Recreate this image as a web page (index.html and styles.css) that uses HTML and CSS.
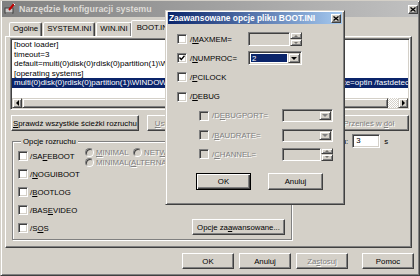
FILE: index.html
```html
<!DOCTYPE html>
<html lang="pl">
<head>
  <meta charset="UTF-8">
  <title>Narzędzie konfiguracji systemu</title>
  <link rel="stylesheet" href="styles.css">
</head>
<body>

<div class="window main-window">
  <div class="titlebar inactive">
    <svg class="app-icon" width="12" height="12" viewBox="0 0 12 12">
      <rect x="1" y="5" width="8" height="5" fill="#c8c8c8" stroke="#404040" stroke-width="1"/>
      <rect x="2" y="10" width="6" height="1.5" fill="#808080"/>
      <path d="M5 7 L10 1" stroke="#c00000" stroke-width="2"/>
      <path d="M9.5 0.5 L11 2" stroke="#fff" stroke-width="1"/>
    </svg>
    <span class="title-text">Narzędzie konfiguracji systemu</span>
    <span class="close-btn">
      <svg width="6" height="5" viewBox="0 0 6 5"><path d="M0.5 0.5 L5.5 4.5 M5.5 0.5 L0.5 4.5" stroke="#000" stroke-width="1.3"/></svg>
    </span>
  </div>

  <div class="tabs">
    <div class="tab">Ogólne</div>
    <div class="tab">SYSTEM.INI</div>
    <div class="tab">WIN.INI</div>
    <div class="tab active">BOOT.INI</div>
    <div class="tab">Usługi</div>
    <div class="tab">Uruchamianie</div>
  </div>

  <div class="tab-panel">
    <div class="ini-box">
      <div class="ini-lines">
        <div class="ini-line">[boot loader]</div>
        <div class="ini-line">timeout=3</div>
        <div class="ini-line">default=multi(0)disk(0)rdisk(0)partition(1)\WINDOWS</div>
        <div class="ini-line">[operating systems]</div>
        <div class="ini-line selected">multi(0)disk(0)rdisk(0)partition(1)\WINDOWS="Microsoft Windows XP Professional" /noexecute=optin /fastdetect</div>
      </div>
      <div class="hscroll">
        <span class="sb-btn"><i class="arrow-left"></i></span>
        <span class="sb-thumb"></span>
        <span class="sb-track"></span>
        <span class="sb-btn"><i class="arrow-right"></i></span>
      </div>
    </div>

    <div class="action-row">
      <button class="btn btn-check"><u>S</u>prawdź wszystkie ścieżki rozruchu</button>
      <button class="btn btn-default-os" disabled><u>U</u>staw jako domyślne</button>
      <span class="spacer"></span>
      <button class="btn btn-move" disabled>Przenieś w <u>g</u>órę</button>
      <button class="btn btn-move" disabled>Przenieś w <u>d</u>ół</button>
    </div>

    <div class="lower">
      <fieldset class="groupbox">
        <legend>Opcje rozruchu</legend>
        <div class="group-body">
          <div class="check-col">
            <div class="check-row"><span class="chk"></span><span>/SA<u>F</u>EBOOT</span></div>
            <div class="check-row"><span class="chk"></span><span>/<u>N</u>OGUIBOOT</span></div>
            <div class="check-row"><span class="chk"></span><span>/<u>B</u>OOTLOG</span></div>
            <div class="check-row"><span class="chk"></span><span>/BAS<u>E</u>VIDEO</span></div>
            <div class="check-row"><span class="chk"></span><span>/S<u>O</u>S</span></div>
          </div>
          <div class="radio-grid">
            <div class="radio-row"><span class="radio"></span><span><u>M</u>INIMAL</span></div>
            <div class="radio-row"><span class="radio"></span><span>NET<u>W</u>ORK</span></div>
            <div class="radio-row"><span class="radio"></span><span><u>D</u>SREPAIR</span></div>
            <div class="radio-row wide"><span class="radio"></span><span>MINIMAL(<u>A</u>LTERNATESHELL)</span></div>
          </div>
          <button class="btn btn-advanced">Opcje za<u>a</u>wansowane...</button>
        </div>
      </fieldset>

      <div class="timeout">
        <span>Limit c<u>z</u>asu:</span>
        <span class="text-field">3</span>
        <span>s</span>
      </div>
    </div>
  </div>

  <div class="footer">
    <button class="btn btn-footer">OK</button>
    <button class="btn btn-footer">Anuluj</button>
    <button class="btn btn-footer" disabled>Za<u>s</u>tosuj</button>
    <button class="btn btn-footer btn-help">Pomoc</button>
  </div>
</div>

<div class="window dialog">
  <div class="titlebar active">
    <span class="title-text">Zaawansowane opcje pliku BOOT.INI</span>
    <span class="close-btn">
      <svg width="6" height="5" viewBox="0 0 6 5"><path d="M0.5 0.5 L5.5 4.5 M5.5 0.5 L0.5 4.5" stroke="#000" stroke-width="1.3"/></svg>
    </span>
  </div>

  <div class="dialog-body">
    <div class="opt-row">
      <div class="opt"><span class="chk"></span><span>/<u>M</u>AXMEM=</span></div>
      <div class="spin disabled">
        <span class="spin-field"></span>
        <span class="spin-btns">
          <span class="spin-btn"><i class="arrow-up"></i></span>
          <span class="spin-btn"><i class="arrow-down"></i></span>
        </span>
      </div>
    </div>

    <div class="opt-row">
      <div class="opt">
        <span class="chk">
          <svg width="6" height="6" viewBox="0 0 6 6"><path d="M0.5 2.5 L2.3 4.5 L5.5 0.8" fill="none" stroke="#000" stroke-width="1.3"/></svg>
        </span>
        <span>/<u>N</u>UMPROC=</span>
      </div>
      <div class="combo">
        <span class="combo-value">2</span>
        <span class="combo-btn"><i class="arrow-down"></i></span>
      </div>
    </div>

    <div class="opt-row">
      <div class="opt"><span class="chk"></span><span>/<u>P</u>CILOCK</span></div>
    </div>

    <div class="opt-row">
      <div class="opt"><span class="chk"></span><span>/<u>D</u>EBUG</span></div>
    </div>

    <div class="opt-row sub">
      <div class="opt disabled"><span class="chk"></span><span>/D<u>E</u>BUGPORT=</span></div>
      <div class="combo disabled">
        <span class="combo-value"></span>
        <span class="combo-btn"><i class="arrow-down"></i></span>
      </div>
    </div>

    <div class="opt-row sub">
      <div class="opt disabled"><span class="chk"></span><span>/<u>B</u>AUDRATE=</span></div>
      <div class="combo disabled">
        <span class="combo-value"></span>
        <span class="combo-btn"><i class="arrow-down"></i></span>
      </div>
    </div>

    <div class="opt-row sub">
      <div class="opt disabled"><span class="chk"></span><span>/<u>C</u>HANNEL=</span></div>
      <div class="spin disabled">
        <span class="spin-field"></span>
        <span class="spin-btns">
          <span class="spin-btn"><i class="arrow-up"></i></span>
          <span class="spin-btn"><i class="arrow-down"></i></span>
        </span>
      </div>
    </div>

    <div class="dialog-buttons">
      <button class="btn btn-dialog is-default">OK</button>
      <button class="btn btn-dialog">Anuluj</button>
    </div>
  </div>
</div>

</body>
</html>
```

FILE: styles.css
```css
* {
  box-sizing: border-box;
}
body {
  margin: 0;
  background: #d4d0c8;
  font-family: "Liberation Sans", Arial, sans-serif;
  font-size: 7.8px;
  color: #000;
}
u {
  text-decoration-thickness: 1px;
  text-underline-offset: 1px;
}

/* window frames */
.window {
  background: #d4d0c8;
  border: 1px solid;
  border-color: #d4d0c8 #404040 #404040 #d4d0c8;
  box-shadow: inset 1px 1px #fff, inset -1px -1px #808080;
}
.main-window {
  width: 420px;
  height: 276px;
  padding: 0 1px 1px 1px;
  display: flex;
  flex-direction: column;
}
.titlebar {
  display: flex;
  align-items: center;
  flex-shrink: 0;
  color: #fff;
  font-weight: bold;
  font-size: 8.4px;
}
.titlebar.inactive {
  height: 16px;
  padding: 0 0 0 2px;
  background: linear-gradient(to right, #808080, #c0c0c0);
  color: #dedbd6;
  font-size: 8.9px;
}
.titlebar.active {
  height: 12px;
  padding: 0 1px 0 1px;
  background: linear-gradient(to right, #0a246a, #a6caf0);
}
.app-icon {
  margin-right: 3px;
}
.title-text {
  white-space: nowrap;
}
.close-btn {
  margin-left: auto;
  width: 10px;
  height: 9px;
  display: flex;
  align-items: center;
  justify-content: center;
  background: #d4d0c8;
  border: 1px solid;
  border-color: #fff #404040 #404040 #fff;
  box-shadow: inset -1px -1px #808080;
}

/* tabs */
.tabs {
  display: flex;
  align-items: flex-end;
  height: 16px;
  margin-top: 3px;
  padding-left: 7px;
  position: relative;
  z-index: 1;
  flex-shrink: 0;
}
.tab {
  height: 14px;
  line-height: 12px;
  padding: 0 3px;
  margin-right: 1px;
  white-space: nowrap;
  background: #d4d0c8;
  border: 1px solid;
  border-bottom: none;
  border-color: #fff #404040 transparent #fff;
  border-radius: 2px 2px 0 0;
  box-shadow: inset -1px 0 #808080;
}
.tab.active {
  height: 17px;
  line-height: 14px;
  margin: 0 -1px -1px -2px;
  padding: 0 5px;
}
.tab-panel {
  flex: 1;
  margin: 0 6px 0 3px;
  padding: 1px 1px 0 4px;
  border: 1px solid;
  border-color: #fff #404040 #404040 #fff;
  box-shadow: inset -1px -1px #808080;
  display: flex;
  flex-direction: column;
}

/* boot.ini text box */
.ini-box {
  height: 72px;
  padding: 1px;
  background: #fff;
  border: 1px solid;
  border-color: #808080 #fff #fff #808080;
  box-shadow: inset 1px 1px #404040, inset -1px -1px #d4d0c8;
  display: flex;
  flex-direction: column;
}
.ini-lines {
  flex: 1;
  overflow: hidden;
  font-size: 8px;
}
.ini-line {
  white-space: nowrap;
  line-height: 9.6px;
  padding-left: 2px;
}
.ini-line.selected {
  background: #0a246a;
  color: #fff;
}
.hscroll {
  display: flex;
  height: 10px;
}
.sb-btn,
.sb-thumb,
.spin-btn,
.combo-btn {
  display: flex;
  align-items: center;
  justify-content: center;
  background: #d4d0c8;
  border: 1px solid;
  border-color: #d4d0c8 #404040 #404040 #d4d0c8;
  box-shadow: inset 1px 1px #fff, inset -1px -1px #808080;
}
.sb-btn {
  width: 10px;
}
.sb-thumb {
  width: 366px;
}
.sb-track {
  flex: 1;
  background: repeating-conic-gradient(#fff 0 25%, #d4d0c8 0 50%) 0 0 / 2px 2px;
}

/* small arrows */
.arrow-left,
.arrow-right,
.arrow-up,
.arrow-down {
  width: 0;
  height: 0;
  border: 3px solid transparent;
}
.arrow-left {
  border-right-color: #000;
  border-left-width: 0;
}
.arrow-right {
  border-left-color: #000;
  border-right-width: 0;
}
.arrow-down {
  border-top-color: #000;
  border-bottom-width: 0;
}
.arrow-up {
  border-bottom-color: #000;
  border-top-width: 0;
}
.spin-btn .arrow-up,
.spin-btn .arrow-down {
  border-width: 2px;
}
.spin-btn .arrow-up { border-top-width: 0; }
.spin-btn .arrow-down { border-bottom-width: 0; }

/* buttons */
.btn {
  font: inherit;
  color: #000;
  height: 16px;
  padding: 0;
  white-space: nowrap;
  background: #d4d0c8;
  border: 1px solid;
  border-color: #fff #404040 #404040 #fff;
  box-shadow: inset -1px -1px #808080;
}
.btn:disabled {
  color: #808080;
  text-shadow: 1px 1px #fff;
}
.btn.is-default {
  border-color: #000;
  box-shadow: inset 1px 1px #fff, inset -1px -1px #404040, inset -2px -2px #808080;
}
.action-row {
  display: flex;
  margin-top: 5px;
  padding-right: 1px;
}
.btn-check {
  width: 129px;
  margin-left: 1px;
}
.btn-default-os {
  width: 90px;
  margin-left: 8px;
}
.spacer {
  flex: 1;
}
.btn-move {
  width: 81px;
  margin-left: 6px;
}

/* boot options */
.lower {
  display: flex;
  align-items: flex-start;
}
.groupbox {
  width: 280px;
  margin: 6px 0 0 2px;
  padding: 1px 6px 2px 5px;
  border: 1px solid #808080;
  box-shadow: 1px 1px #fff, inset 1px 1px #fff;
}
.groupbox legend {
  line-height: 9px;
  padding: 0 2px;
  margin-left: 3px;
  background: #d4d0c8;
}
.group-body {
  display: grid;
  grid-template-columns: 67px 1fr;
  grid-template-rows: repeat(5, 18px);
}
.check-col {
  grid-column: 1;
  grid-row: 1 / 6;
  display: flex;
  flex-direction: column;
}
.check-row {
  height: 18px;
  display: flex;
  align-items: center;
  gap: 2px;
  white-space: nowrap;
}
.radio-grid {
  grid-column: 2;
  grid-row: 1 / 3;
  display: grid;
  grid-template-columns: 48px 48px 1fr;
  grid-auto-rows: 10px;
  color: #808080;
  text-shadow: 1px 1px #fff;
}
.radio-row {
  display: flex;
  align-items: center;
  gap: 2px;
  white-space: nowrap;
}
.radio-row.wide {
  grid-column: 1 / 4;
}
.radio {
  width: 9px;
  height: 9px;
  flex-shrink: 0;
  border-radius: 50%;
  background: #d4d0c8;
  border: 1px solid;
  border-color: #808080 #fff #fff #808080;
  box-shadow: inset 1px 1px #404040;
}
.btn-advanced {
  grid-column: 2;
  grid-row: 4 / 6;
  justify-self: end;
  align-self: end;
  width: 93px;
  margin-bottom: 2px;
}
.timeout {
  display: flex;
  align-items: center;
  gap: 4px;
  margin: 3px 0 0 15px;
  white-space: nowrap;
}
.text-field {
  width: 28px;
  height: 14px;
  padding: 1px 3px;
  line-height: 10px;
  background: #fff;
  border: 1px solid;
  border-color: #808080 #fff #fff #808080;
  box-shadow: inset 1px 1px #404040, inset -1px -1px #d4d0c8;
}

/* checkboxes */
.chk {
  width: 10px;
  height: 10px;
  flex-shrink: 0;
  display: flex;
  align-items: center;
  justify-content: center;
  background: #fff;
  border: 1px solid;
  border-color: #808080 #fff #fff #808080;
  box-shadow: inset 1px 1px #404040, inset -1px -1px #d4d0c8;
}

/* bottom buttons */
.footer {
  display: flex;
  justify-content: flex-end;
  gap: 5px;
  padding: 5px 4px 5px 0;
  flex-shrink: 0;
}
.btn-footer {
  width: 52px;
}
.btn-help {
  margin-left: 9px;
}

/* advanced options dialog */
.dialog {
  position: absolute;
  z-index: 10;
  left: 165px;
  top: 10px;
  width: 180px;
  height: 195px;
  padding: 1px 2px 2px 2px;
  display: flex;
  flex-direction: column;
}
.dialog-body {
  padding: 5.5px 0 0 9px;
}
.opt-row {
  height: 19.2px;
  display: flex;
  align-items: center;
}
.opt {
  width: 71px;
  display: flex;
  align-items: center;
  gap: 3px;
  white-space: nowrap;
}
.opt-row.sub {
  padding-left: 22px;
}
.opt-row.sub .opt {
  width: 83px;
}
.opt.disabled {
  color: #808080;
  text-shadow: 1px 1px #fff;
}
.opt.disabled .chk {
  background: #d4d0c8;
}
.spin {
  width: 54px;
  height: 14px;
  display: flex;
}
.opt-row.sub .spin,
.opt-row.sub .combo {
  width: 51px;
  height: 13px;
}
.spin-field {
  flex: 1;
  background: #d4d0c8;
  border: 1px solid;
  border-color: #808080 #fff #fff #808080;
  box-shadow: inset 1px 1px #404040, inset -1px -1px #d4d0c8;
}
.spin-btns {
  width: 12px;
  display: flex;
  flex-direction: column;
}
.spin-btn {
  flex: 1;
}
.spin.disabled .spin-btn i {
  opacity: 0.45;
}
.combo {
  width: 54px;
  height: 14px;
  display: flex;
  padding: 1px;
  background: #fff;
  border: 1px solid;
  border-color: #808080 #fff #fff #808080;
  box-shadow: inset 1px 1px #404040, inset -1px -1px #d4d0c8;
}
.combo-value {
  flex: 1;
  margin: 1px;
  padding-left: 1px;
  line-height: 9px;
  background: #0a246a;
  color: #fff;
}
.combo-btn {
  width: 12px;
}
.combo.disabled {
  background: #d4d0c8;
}
.combo.disabled .combo-value {
  background: transparent;
}
.combo.disabled .combo-btn i {
  border-top-color: #808080;
}
.dialog-buttons {
  display: flex;
  justify-content: center;
  gap: 17px;
  margin-top: 9px;
}
.btn-dialog {
  width: 55px;
  height: 17px;
}
```
